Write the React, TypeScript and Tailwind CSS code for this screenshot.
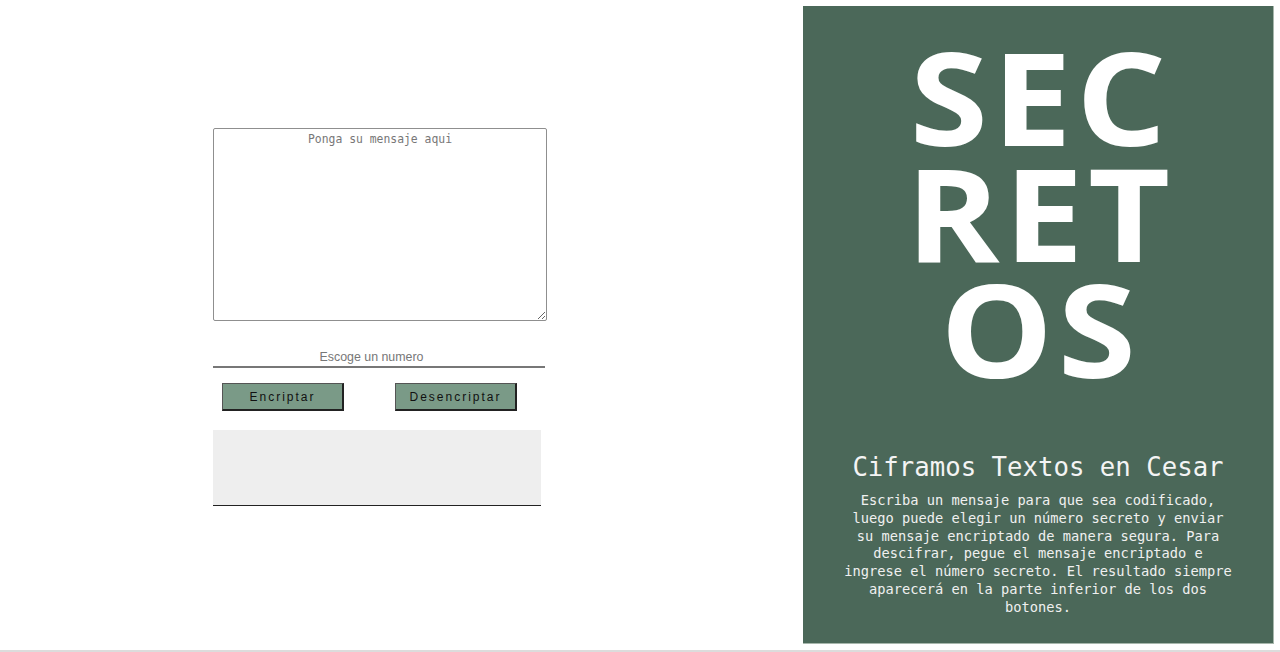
export default function App() {
  return (
    <div className="h-[652px] w-full flex flex-col bg-white overflow-hidden">
      <div className="flex flex-1">
        {/* Formulario */}
        <section className="w-[803px] shrink-0 pt-[128px] pl-[213px]">
          <div className="w-[334px] flex flex-col">
            <textarea
              placeholder="Ponga su mensaje aqui"
              className="w-[334px] h-[193px] border border-[#8f8f8f] rounded-[2px] text-center text-[11.4px] pt-[2px] placeholder:text-[#777] outline-none resize"
              style={{ fontFamily: '"DejaVu Sans Mono", monospace' }}
            />
            <input
              type="number"
              placeholder="Escoge un numero"
              className="mt-[28px] w-[332px] h-[19px] border-b-2 border-[#777] text-center text-[12.4px] placeholder:text-[#777] outline-none pb-[1px]"
              style={{ fontFamily: '"Liberation Sans", Arial, sans-serif' }}
            />
            <div className="flex mt-[15px] pl-[9px] gap-[51px]">
              <button
                className="w-[122px] h-[28px] bg-[#7a9a87] border border-[#555] border-r-2 border-b-2 border-r-[#222] border-b-[#222] text-[12px] tracking-[2px] text-[#111]"
                style={{ fontFamily: '"Liberation Sans", Arial, sans-serif' }}
              >
                Encriptar
              </button>
              <button
                className="w-[122px] h-[28px] bg-[#7a9a87] border border-[#555] border-r-2 border-b-2 border-r-[#222] border-b-[#222] text-[12px] tracking-[2px] text-[#111]"
                style={{ fontFamily: '"Liberation Sans", Arial, sans-serif' }}
              >
                Desencriptar
              </button>
            </div>
            <div className="mt-[19px] w-[328px] h-[76px] bg-[#eeeeee] border-b border-[#222]" />
          </div>
        </section>

        {/* Panel */}
        <aside className="mt-[6px] w-[471px] h-[638px] bg-[#4b6859] border-r border-b border-[#a7b7ac] flex flex-col items-center text-white">
          <h1
            className="mt-[32px] pl-[4px] text-[129px] leading-[116px] font-bold text-center tracking-[4px] scale-x-110"
            style={{ fontFamily: '"Open Sans", "Noto Sans", sans-serif' }}
          >
            SEC
            <br />
            RET
            <br />
            OS
          </h1>
          <h2
            className="mt-[66px] text-[25.7px] leading-[30px] text-[#f4f4f4]"
            style={{ fontFamily: '"DejaVu Sans Mono", monospace' }}
          >
            Ciframos Textos en Cesar
          </h2>
          <p
            className="mt-[10px] w-[392px] text-center text-[13.7px] leading-[17.8px] text-[#f0f0f0]"
            style={{ fontFamily: '"DejaVu Sans Mono", monospace' }}
          >
            Escriba un mensaje para que sea codificado, luego puede elegir un número secreto y enviar su mensaje encriptado de manera segura. Para descifrar, pegue el mensaje encriptado e ingrese el número secreto. El resultado siempre aparecerá en la parte inferior de los dos botones.
          </p>
        </aside>
      </div>
      <div className="h-[2px] bg-[#dcdcdc]" />
    </div>
  )
}
